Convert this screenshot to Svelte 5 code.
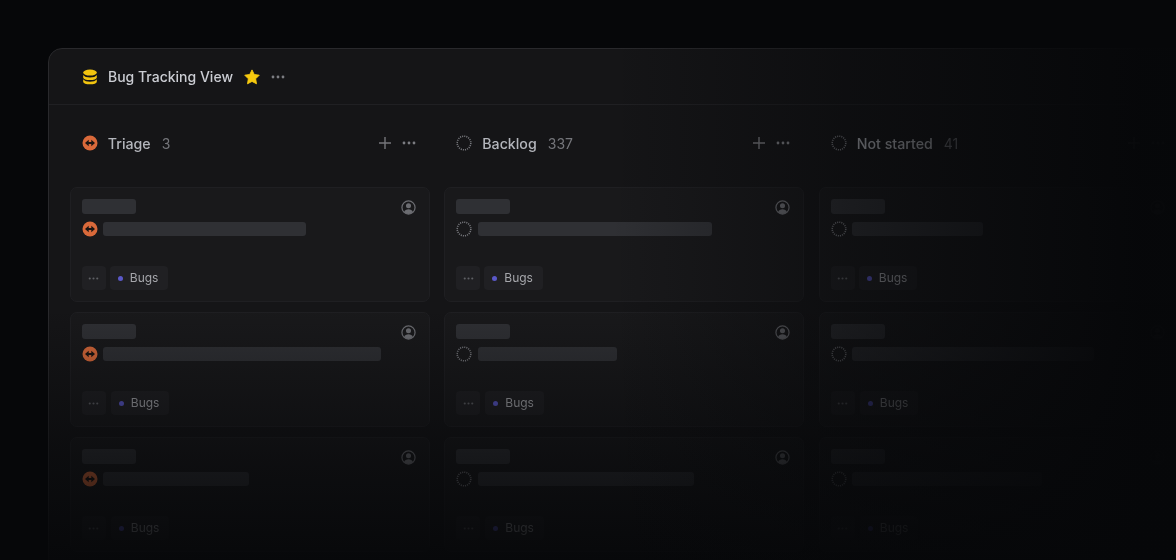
<script lang="ts">
  // Skeleton bar widths per card, one list per column.
  const columns = [
    { name: "Triage", count: "3", kind: "triage", bars: [203, 278, 146], tagOffset: [0, 1, 1] },
    { name: "Backlog", count: "337", kind: "backlog", bars: [234, 139, 216], tagOffset: [0, 1, 1] },
    { name: "Not started", count: "41", kind: "backlog", bars: [131, 242, 190], tagOffset: [0, 1, 1] },
  ];
</script>

{#snippet dots()}
  <svg class="dots" viewBox="0 0 14 4" width="14" height="4" aria-hidden="true">
    <circle cx="2" cy="2" r="1.4" />
    <circle cx="7" cy="2" r="1.4" />
    <circle cx="12" cy="2" r="1.4" />
  </svg>
{/snippet}

{#snippet statusIcon(kind: string)}
  {#if kind === "triage"}
    <svg class="status" viewBox="0 0 16 16" width="16" height="16" aria-hidden="true">
      <circle cx="8" cy="8" r="7.5" fill="#d9693a" />
      <path d="M3 8l3.700-3.300v2.200h2.600V4.700L13 8l-3.700 3.300V9.100H6.700v2.200z" fill="#1a1513" />
    </svg>
  {:else}
    <svg class="status" viewBox="0 0 16 16" width="16" height="16" aria-hidden="true">
      <circle cx="8" cy="8" r="6.800" fill="none" stroke="#77787d" stroke-width="1.600" stroke-dasharray="1.100 1.036" />
    </svg>
  {/if}
{/snippet}

<div class="page">
  <section class="panel">
    <header class="top">
      <svg class="stack" viewBox="0 0 16 16" width="16" height="16" aria-hidden="true">
        <ellipse cx="8" cy="3.600" rx="6.800" ry="3" fill="#f2c40f" />
        <path d="M1.200 5.900c1 1.700 3.800 2.500 6.800 2.500s5.800-.8 6.800-2.500v2.500C14.800 10.100 11.800 11 8 11s-6.800-.9-6.800-2.600z" fill="#f2c40f" />
        <path d="M1.200 10.200c1 1.700 3.800 2.500 6.800 2.500s5.800-.8 6.800-2.500v2.500C14.800 14.400 11.800 15.300 8 15.300s-6.800-.9-6.800-2.600z" fill="#f2c40f" />
      </svg>
      <span class="title">Bug Tracking View</span>
      <svg class="star" viewBox="0 0 16 16" width="16" height="16" aria-hidden="true">
        <path d="M8 .9l2.250 4.600 5 .7-3.600 3.600.85 5L8 12.400l-4.500 2.400.85-5-3.600-3.600 5-.7z" fill="#f6c90e" stroke="#f6c90e" stroke-width=".9" stroke-linejoin="round" />
      </svg>
      {@render dots()}
    </header>

    <div class="board">
      {#each columns as col}
        <div class="column">
          <div class="col-head">
            {@render statusIcon(col.kind)}
            <span class="col-name">{col.name}</span>
            <span class="col-count">{col.count}</span>
            <span class="spacer"></span>
            <svg class="plus" viewBox="0 0 12 12" width="12" height="12" aria-hidden="true">
              <path d="M6 0v12M0 6h12" stroke="#75767b" stroke-width="1.400" fill="none" />
            </svg>
            {@render dots()}
          </div>

          <div class="cards">
            {#each col.bars as width, i}
              <article class="card">
                <div class="card-top">
                  <div class="bar label"></div>
                  <svg class="avatar" viewBox="0 0 16 16" width="15" height="15" aria-hidden="true">
                    <circle cx="8" cy="8" r="7" fill="none" stroke="#6c6d72" stroke-width="1.300" />
                    <circle cx="8" cy="6.200" r="2.700" fill="#6c6d72" />
                    <path d="M3.300 12.800C4 10.800 5.800 9.900 8 9.900s4 .9 4.700 2.900C11.500 14 9.900 14.800 8 14.800s-3.500-.8-4.700-2z" fill="#6c6d72" />
                  </svg>
                </div>
                <div class="card-title">
                  {@render statusIcon(col.kind)}
                  <div class="bar line" style="width: {width}px"></div>
                </div>
                <div class="card-foot">
                  <div class="chip more">{@render dots()}</div>
                  <div class="chip tag" class:wide={col.tagOffset[i]}>
                    <span class="dot"></span>
                    <span class="tag-text">Bugs</span>
                  </div>
                </div>
              </article>
            {/each}
          </div>
        </div>
      {/each}
    </div>
  </section>
  <div class="fade"></div>
</div>

<style>
  :global(body) {
    margin: 0;
    background: #060709;
  }
  .page {
    position: relative;
    width: 1176px;
    height: 560px;
    overflow: hidden;
    background: #060709;
    font-family: Inter, "Liberation Sans", sans-serif;
    padding: 48px 0 0 48px;
    box-sizing: border-box;
  }
  .panel {
    width: 1240px;
    height: 640px;
    box-sizing: border-box;
    background: #151517;
    border: 1px solid #29292c;
    border-radius: 14px;
    filter: blur(0.3px);
  }
  .top {
    display: flex;
    align-items: center;
    height: 56px;
    box-sizing: border-box;
    padding: 0 0 0 33px;
    border-bottom: 1px solid #202023;
  }
  .stack {
    margin-right: 10px;
  }
  .title {
    color: #cbcdd3;
    font-size: 14px;
    font-weight: 500;
    margin-right: 11px;
  }
  .star {
    margin-right: 11px;
  }
  .dots {
    fill: #7c7d82;
    flex: none;
  }
  .board {
    display: flex;
    gap: 14.500px;
    padding: 0 0 0 20.800px;
  }
  .column {
    flex: 0 0 360px;
  }
  .col-head {
    display: flex;
    align-items: center;
    height: 24px;
    margin-top: 26px;
    padding: 0 14px 0 12px;
  }
  .col-name {
    margin-left: 10px;
    color: #b4b6bc;
    font-size: 14.200px;
    font-weight: 500;
  }
  .col-count {
    margin-left: 11px;
    color: #75767b;
    font-size: 14px;
  }
  .spacer {
    flex: 1;
  }
  .plus {
    margin-right: 11px;
  }
  .cards {
    display: flex;
    flex-direction: column;
    gap: 10px;
    margin-top: 32px;
  }
  .card {
    height: 115px;
    box-sizing: border-box;
    background: #19191b;
    border: 1px solid #1f1f22;
    border-radius: 7px;
    padding: 11px;
    display: flex;
    flex-direction: column;
  }
  .card-top {
    display: flex;
    justify-content: space-between;
    align-items: flex-start;
  }
  .bar {
    background: #2f3034;
    border-radius: 3px;
  }
  .label {
    width: 54px;
    height: 15px;
  }
  .avatar {
    margin: 1px 2px 0 0;
  }
  .card-title {
    display: flex;
    align-items: center;
    gap: 5.400px;
    margin-top: 6px;
  }
  .card-title .bar {
    height: 14px;
  }
  .card-foot {
    display: flex;
    gap: 4px;
    margin-top: auto;
  }
  .chip {
    display: flex;
    align-items: center;
    height: 24px;
    box-sizing: border-box;
    background: #202023;
    border-radius: 4px;
    color: #a5a6ab;
    font-size: 12px;
  }
  .more {
    width: 24px;
    justify-content: center;
  }
  .more :global(.dots) {
    width: 11px;
    height: 3px;
    fill: #5f6065;
  }
  .tag {
    padding: 0 10px 0 8px;
    gap: 7px;
  }
  .tag.wide {
    margin-left: 1px;
  }
  .tag-text {
    margin-bottom: 1px;
  }
  .dot {
    width: 5px;
    height: 5px;
    border-radius: 50%;
    background: #5a58c8;
  }
  .fade {
    position: absolute;
    inset: 0;
    pointer-events: none;
    background:
      linear-gradient(to right, rgba(6, 7, 9, 0) 52%, rgba(6, 7, 9, 0.5) 72%, rgba(6, 7, 9, 0.98) 97%),
      linear-gradient(to bottom, rgba(6, 7, 9, 0) 55%, rgba(6, 7, 9, 0.6) 82%, rgba(6, 7, 9, 0.92) 100%);
  }
</style>
